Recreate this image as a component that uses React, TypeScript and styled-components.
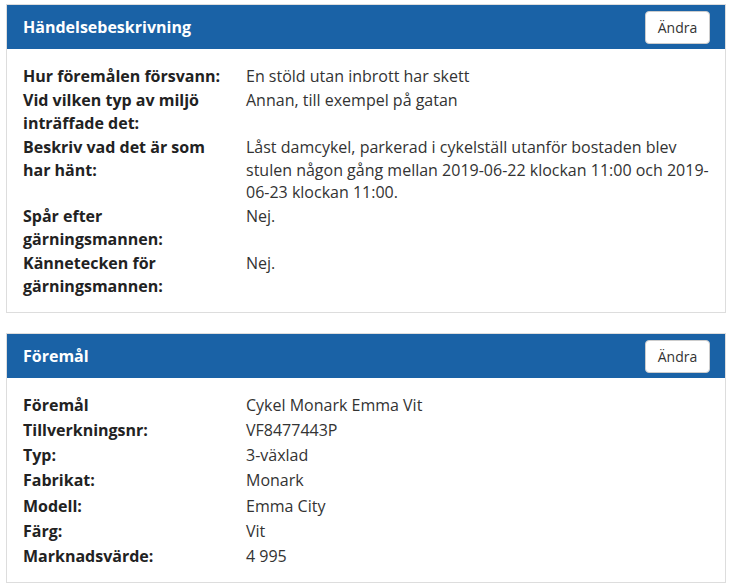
import React from 'react';
import styled, { createGlobalStyle } from 'styled-components';

const GlobalStyle = createGlobalStyle`
    body {
        margin: 0;
        background: #ffffff;
        font-family: 'Open Sans', 'Noto Sans', sans-serif;
    }
`;

const Page = styled.div`
    display: flex;
    flex-direction: column;
    gap: 20px;
    padding: 4px 5px 0 6px;
`;

const Card = styled.section`
    border: 1px solid #dddddd;
    background: #ffffff;
`;

const Header = styled.div`
    display: flex;
    align-items: center;
    justify-content: space-between;
    height: 44px;
    padding: 0 15px 0 16px;
    background: #1a62a6;
`;

const Title = styled.h2`
    margin: 0;
    font-size: 16px;
    font-weight: 700;
    color: #ffffff;
`;

const EditButton = styled.button`
    height: 33px;
    width: 65px;
    padding: 0;
    border: 1px solid #cccccc;
    border-radius: 4px;
    background: #ffffff;
    color: #333333;
    font-family: inherit;
    font-size: 14px;
`;

const Body = styled.dl<{ $gap: number }>`
    display: grid;
    grid-template-columns: 223px 1fr;
    row-gap: ${ p => p.$gap }px;
    margin: 0;
    padding: 16px 16px 15px 16px;
    font-size: 16px;
    line-height: 22.5px;
`;

const Label = styled.dt`
    font-weight: 700;
    color: #222222;
    padding-right: 10px;
`;

const Value = styled.dd`
    margin: 0;
    color: #333333;
`;

const incident: [string, string][] = [
    ['Hur föremålen försvann:', 'En stöld utan inbrott har skett'],
    ['Vid vilken typ av miljö inträffade det:', 'Annan, till exempel på gatan'],
    ['Beskriv vad det är som har hänt:', 'Låst damcykel, parkerad i cykelställ utanför bostaden blev stulen någon gång mellan 2019-06-22 klockan 11:00 och 2019-06-23 klockan 11:00.'],
    ['Spår efter gärningsmannen:', 'Nej.'],
    ['Kännetecken för gärningsmannen:', 'Nej.'],
];

const item: [string, string][] = [
    ['Föremål', 'Cykel Monark Emma Vit'],
    ['Tillverkningsnr:', 'VF8477443P'],
    ['Typ:', '3-växlad'],
    ['Fabrikat:', 'Monark'],
    ['Modell:', 'Emma City'],
    ['Färg:', 'Vit'],
    ['Marknadsvärde:', '4 995'],
];

const Section = ({ title, rows, gap }: { title: string; rows: [string, string][]; gap: number }) => (
    <Card>
        <Header>
            <Title>{ title }</Title>
            <EditButton>Ändra</EditButton>
        </Header>
        <Body $gap={ gap }>
            { rows.map(([label, value]) => (
                <React.Fragment key={ label }>
                    <Label>{ label }</Label>
                    <Value>{ value }</Value>
                </React.Fragment>
            )) }
        </Body>
    </Card>
);

const App = () => (
    <Page>
        <GlobalStyle />
        <Section title="Händelsebeskrivning" rows={ incident } gap={ 1.8 } />
        <Section title="Föremål" rows={ item } gap={ 2.6 } />
    </Page>
);

export default App;
